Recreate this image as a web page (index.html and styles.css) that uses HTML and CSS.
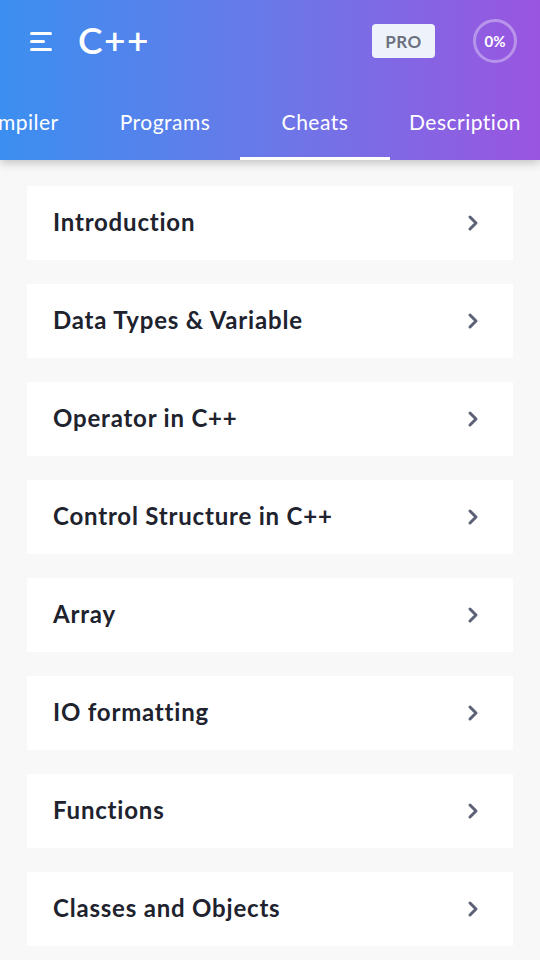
FILE: index.html
```html
<!DOCTYPE html>
<html>
<head>
    <title>C++ Cheats</title>
    <link rel="stylesheet" href="styles.css">
</head>
<body>
    <div class="header">
        <div class="topbar">
            <svg class="menu" width="26" height="22" viewBox="0 0 26 22">
                <rect x="1" y="2" width="22" height="3" rx="1.5" fill="#fff"/>
                <rect x="1" y="10" width="15" height="3" rx="1.5" fill="#fff"/>
                <rect x="1" y="18" width="22" height="3" rx="1.5" fill="#fff"/>
            </svg>
            <span class="title">C++</span>
            <span class="pro">PRO</span>
            <span class="progress">0%</span>
        </div>
        <div class="tabs">
            <div class="tab">Compiler</div>
            <div class="tab">Programs</div>
            <div class="tab active">Cheats</div>
            <div class="tab">Description</div>
        </div>
    </div>

    <div class="list">
        <div class="item"><span>Introduction</span><svg class="chev" width="14" height="18" viewBox="0 0 14 18"><path d="M4 3l6 6-6 6" fill="none" stroke="#5d6178" stroke-width="3" stroke-linecap="round" stroke-linejoin="round"/></svg></div>
        <div class="item"><span>Data Types &amp; Variable</span><svg class="chev" width="14" height="18" viewBox="0 0 14 18"><path d="M4 3l6 6-6 6" fill="none" stroke="#5d6178" stroke-width="3" stroke-linecap="round" stroke-linejoin="round"/></svg></div>
        <div class="item"><span>Operator in C++</span><svg class="chev" width="14" height="18" viewBox="0 0 14 18"><path d="M4 3l6 6-6 6" fill="none" stroke="#5d6178" stroke-width="3" stroke-linecap="round" stroke-linejoin="round"/></svg></div>
        <div class="item"><span>Control Structure in C++</span><svg class="chev" width="14" height="18" viewBox="0 0 14 18"><path d="M4 3l6 6-6 6" fill="none" stroke="#5d6178" stroke-width="3" stroke-linecap="round" stroke-linejoin="round"/></svg></div>
        <div class="item"><span>Array</span><svg class="chev" width="14" height="18" viewBox="0 0 14 18"><path d="M4 3l6 6-6 6" fill="none" stroke="#5d6178" stroke-width="3" stroke-linecap="round" stroke-linejoin="round"/></svg></div>
        <div class="item"><span>IO formatting</span><svg class="chev" width="14" height="18" viewBox="0 0 14 18"><path d="M4 3l6 6-6 6" fill="none" stroke="#5d6178" stroke-width="3" stroke-linecap="round" stroke-linejoin="round"/></svg></div>
        <div class="item"><span>Functions</span><svg class="chev" width="14" height="18" viewBox="0 0 14 18"><path d="M4 3l6 6-6 6" fill="none" stroke="#5d6178" stroke-width="3" stroke-linecap="round" stroke-linejoin="round"/></svg></div>
        <div class="item"><span>Classes and Objects</span><svg class="chev" width="14" height="18" viewBox="0 0 14 18"><path d="M4 3l6 6-6 6" fill="none" stroke="#5d6178" stroke-width="3" stroke-linecap="round" stroke-linejoin="round"/></svg></div>
    </div>
</body>
</html>
```

FILE: styles.css
```css
body {
    margin: 0;
    background: #f8f8f8;
    font-family: Lato, "Open Sans", sans-serif;
    overflow: hidden;
}
.header {
    height: 160px;
    background: linear-gradient(90deg, #3b8ff0 0%, #6a78e8 50%, #9a55e0 100%);
    box-shadow: 0 2px 10px rgba(0, 0, 0, 0.25);
    color: #fff;
    overflow: hidden;
}
.topbar {
    height: 82px;
    display: flex;
    align-items: center;
    padding: 0 23px 0 29px;
}
.menu {
    margin-right: 23px;
}
.title {
    font-size: 37px;
    font-weight: 600;
    letter-spacing: 1.5px;
    flex: 1;
    margin-top: -3px;
}
.pro {
    background: #eef3fb;
    color: #6b7080;
    font-weight: 700;
    font-size: 17px;
    letter-spacing: 0.5px;
    width: 63px;
    height: 34px;
    border-radius: 4px;
    display: flex;
    align-items: center;
    justify-content: center;
    margin-right: 38px;
}
.progress {
    width: 38px;
    height: 38px;
    border: 3px solid rgba(255, 255, 255, 0.35);
    border-radius: 50%;
    display: flex;
    align-items: center;
    justify-content: center;
    font-size: 15px;
    font-weight: 700;
}
.tabs {
    display: flex;
    margin-left: -60px;
    height: 78px;
}
.tab {
    flex: 0 0 150px;
    text-align: center;
    font-size: 21px;
    letter-spacing: 0.5px;
    line-height: 80px;
    height: 78px;
    box-sizing: border-box;
}
.tab.active {
    border-bottom: 3px solid #fff;
}
.list {
    padding: 26px 27px;
    display: flex;
    flex-direction: column;
    gap: 24px;
}
.item {
    background: #fff;
    height: 74px;
    box-sizing: border-box;
    display: flex;
    align-items: center;
    justify-content: space-between;
    padding: 0 33px 3px 26px;
    font-size: 24px;
    font-weight: 700;
    letter-spacing: 0.8px;
    color: #20222e;
}
.chev {
    margin-top: 3px;
}
```
